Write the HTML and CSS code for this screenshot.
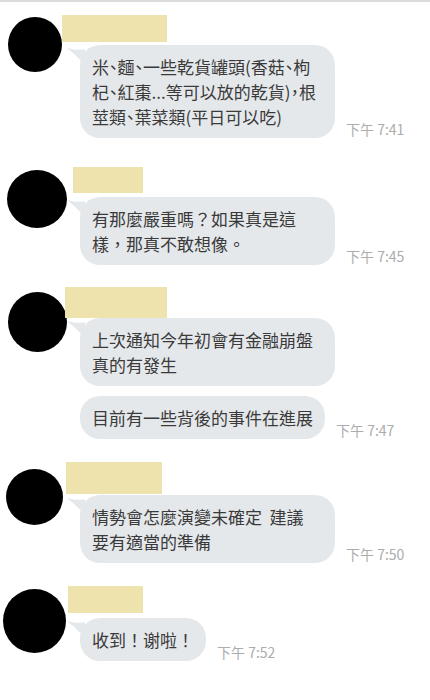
FILE: index.html
```html
<!DOCTYPE html>
<html lang="zh-Hant">
<head>
    <meta charset="UTF-8">
    <meta name="viewport" content="width=device-width, initial-scale=1.0">
    <title>聊天記錄</title>
    <link rel="stylesheet" href="styles.css">
</head>
<body>
    <div class="chat">
        <!-- 7:41 -->
        <div class="msg msg-1">
            <div class="avatar"></div>
            <div class="content">
                <div class="name"></div>
                <div class="line">
                    <div class="bubble wide tail tight">米、麵、一些乾貨罐頭(香菇、枸<br>杞、紅棗...等可以放的乾貨)，根<br>莖類、葉菜類(平日可以吃)</div>
                    <span class="time">下午 7:41</span>
                </div>
            </div>
        </div>

        <!-- 7:45 -->
        <div class="msg msg-2">
            <div class="avatar"></div>
            <div class="content">
                <div class="name"></div>
                <div class="line">
                    <div class="bubble wide tail">有那麼嚴重嗎？如果真是這<br>樣，那真不敢想像。</div>
                    <span class="time">下午 7:45</span>
                </div>
            </div>
        </div>

        <!-- 7:47 -->
        <div class="msg msg-3">
            <div class="avatar"></div>
            <div class="content">
                <div class="name"></div>
                <div class="line">
                    <div class="bubble wide tail">上次通知今年初會有金融崩盤<br>真的有發生</div>
                </div>
                <div class="line next">
                    <div class="bubble">目前有一些背後的事件在進展</div>
                    <span class="time">下午 7:47</span>
                </div>
            </div>
        </div>

        <!-- 7:50 -->
        <div class="msg msg-4">
            <div class="avatar"></div>
            <div class="content">
                <div class="name"></div>
                <div class="line">
                    <div class="bubble wide tail">情勢會怎麼演變未確定&nbsp;&nbsp;建議<br>要有適當的準備</div>
                    <span class="time">下午 7:50</span>
                </div>
            </div>
        </div>

        <!-- 7:52 -->
        <div class="msg msg-5">
            <div class="avatar"></div>
            <div class="content">
                <div class="name"></div>
                <div class="line">
                    <div class="bubble tail">收到！谢啦！</div>
                    <span class="time">下午 7:52</span>
                </div>
            </div>
        </div>
    </div>
</body>
</html>
```

FILE: styles.css
```css
body {
    margin: 0;
    background: #fff;
    font-family: "Noto Sans CJK TC", "Noto Sans", sans-serif;
}

.chat {
    width: 430px;
    height: 700px;
    border-top: 2px solid #dcdcdc;
    box-sizing: border-box;
    overflow: hidden;
}

.msg {
    display: flex;
    align-items: flex-start;
}

.avatar {
    flex: none;
    background: #000;
    border-radius: 50%;
}

.content {
    display: flex;
    flex-direction: column;
    align-items: flex-start;
}

/* 名字被遮住的黃色塊 */
.name {
    background: #efe3ad;
}

.line {
    display: flex;
    align-items: flex-end;
}

.line.next {
    margin-top: 10px;
}

.bubble {
    position: relative;
    background: #e5e8eb;
    color: #3a3a3a;
    font-size: 17px;
    line-height: 25px;
    padding: 9px 12px;
    border-radius: 20px;
    white-space: nowrap;
}

.bubble.wide {
    width: 255px;
    box-sizing: border-box;
}

/* 標點較窄的那一則 */
.bubble.tight {
    font-feature-settings: "palt";
}

/* 泡泡左上角的小尾巴 */
.bubble.tail::before {
    content: "";
    position: absolute;
    left: -13px;
    top: 3px;
    width: 18px;
    height: 15px;
    background: #e5e8eb;
    clip-path: polygon(0 0, 45% 12%, 100% 10%, 100% 100%, 70% 75%, 40% 40%, 15% 15%);
}

.time {
    margin-left: 11px;
    margin-bottom: 1px;
    font-size: 14px;
    line-height: 16px;
    color: #acacac;
    white-space: nowrap;
}

/* 每則訊息的位置 */
.msg-1 { margin-top: 13px; }
.msg-1 .avatar { width: 54px; height: 55px; margin: 2px 18px 0 8px; }
.msg-1 .name { width: 105px; height: 27px; margin-left: -18px; }
.msg-1 .line { margin-top: 3px; }

.msg-2 { margin-top: 29px; }
.msg-2 .avatar { width: 60px; height: 58px; margin: 3px 13px 0 7px; }
.msg-2 .name { width: 70px; height: 26px; margin-left: -7px; }
.msg-2 .line { margin-top: 4px; }

.msg-3 { margin-top: 22px; }
.msg-3 .avatar { width: 59px; height: 60px; margin: 5px 13px 0 8px; }
.msg-3 .name { width: 102px; height: 31px; margin-left: -15px; }

.msg-4 { margin-top: 23px; }
.msg-4 .avatar { width: 57px; height: 56px; margin: 7px 17px 0 6px; }
.msg-4 .name { width: 96px; height: 32px; margin-left: -14px; }
.msg-4 .line { margin-top: 1px; }

.msg-5 { margin-top: 23px; }
.msg-5 .avatar { width: 63px; height: 64px; margin: 3px 14px 0 3px; }
.msg-5 .name { width: 75px; height: 27px; margin-left: -12px; }
.msg-5 .line { margin-top: 5px; }
```
